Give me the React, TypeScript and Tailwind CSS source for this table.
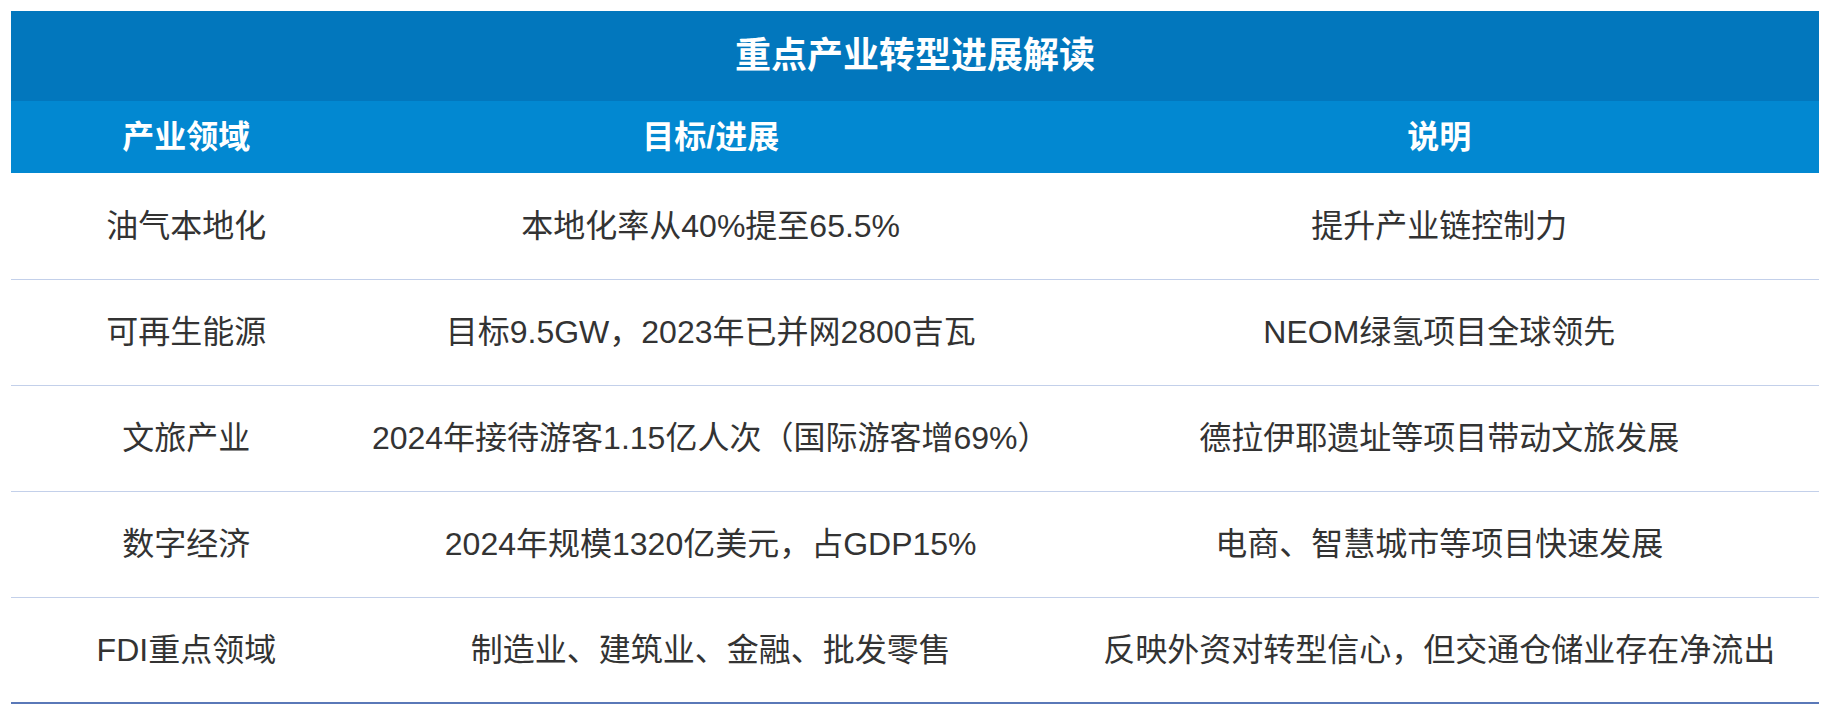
const rows = [
  ["油气本地化", "本地化率从40%提至65.5%", "提升产业链控制力"],
  ["可再生能源", "目标9.5GW，2023年已并网2800吉瓦", "NEOM绿氢项目全球领先"],
  ["文旅产业", "2024年接待游客1.15亿人次（国际游客增69%）", "德拉伊耶遗址等项目带动文旅发展"],
  ["数字经济", "2024年规模1320亿美元，占GDP15%", "电商、智慧城市等项目快速发展"],
  ["FDI重点领域", "制造业、建筑业、金融、批发零售", "反映外资对转型信心，但交通仓储业存在净流出"],
];

export default function App() {
  return (
    <div
      className="bg-white px-[11px] pt-[11px]"
      style={{ fontFamily: '"Liberation Sans", "Noto Sans CJK SC", sans-serif' }}
    >
      <table className="w-full table-fixed border-collapse text-center">
        <colgroup>
          <col className="w-[19.4%]" />
          <col className="w-[38.6%]" />
          <col className="w-[42%]" />
        </colgroup>
        <thead>
          {/* title band */}
          <tr className="h-[90px] bg-[#0277bd] text-white">
            <th colSpan={3} className="text-[36px] font-bold">
              重点产业转型进展解读
            </th>
          </tr>
          <tr className="h-[72px] bg-[#0288d1] text-white text-[32px] font-bold">
            <th>产业领域</th>
            <th>目标/进展</th>
            <th>说明</th>
          </tr>
        </thead>
        <tbody className="text-[32px] text-[#333333]">
          {rows.map((r, i) => (
            <tr
              key={i}
              className={
                i === rows.length - 1
                  ? "h-[106px] border-b-2 border-[#5a78b8]"
                  : "h-[106px] border-b border-[#c3d0ea]"
              }
            >
              <td>{r[0]}</td>
              <td>{r[1]}</td>
              <td>{r[2]}</td>
            </tr>
          ))}
        </tbody>
      </table>
    </div>
  );
}
